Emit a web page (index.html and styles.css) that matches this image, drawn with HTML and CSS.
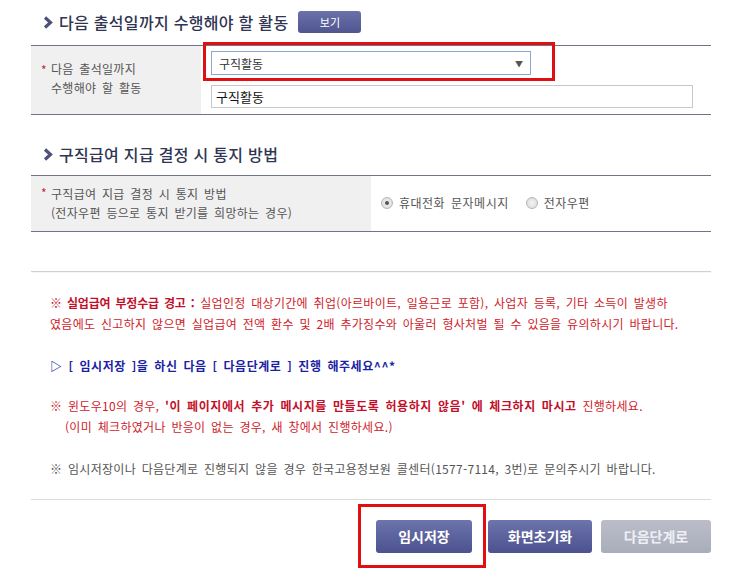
FILE: index.html
```html
<!DOCTYPE html>
<html lang="ko">
<head>
<meta charset="utf-8">
<link rel="stylesheet" href="styles.css">
</head>
<body>
<div class="wrap">
  <div class="sec-title first">
    <svg class="chev" width="10" height="13" viewBox="0 0 10 13"><polyline points="2,1.5 7.5,6.5 2,11.5" fill="none" stroke="#4c5275" stroke-width="3.2"/></svg>
    <span class="ttl">다음 출석일까지 수행해야 할 활동</span>
    <span class="btn-view">보기</span>
  </div>
  <div class="tbl t1">
    <div class="lbl"><span class="req">*</span><span>다음 출석일까지<br>수행해야 할 활동</span></div>
    <div class="val">
      <div class="sel"><span>구직활동</span><span class="arr">▼</span></div>
      <div class="inp">구직활동</div>
    </div>
    <div class="mark m1"></div>
  </div>

  <div class="sec-title second">
    <svg class="chev" width="10" height="13" viewBox="0 0 10 13"><polyline points="2,1.5 7.5,6.5 2,11.5" fill="none" stroke="#4c5275" stroke-width="3.2"/></svg>
    <span class="ttl">구직급여 지급 결정 시 통지 방법</span>
  </div>
  <div class="tbl t2">
    <div class="lbl"><span class="req">*</span><span>구직급여 지급 결정 시 통지 방법<br>(전자우편 등으로 통지 받기를 희망하는 경우)</span></div>
    <div class="val radios">
      <span class="radio on"></span><span class="rt">휴대전화 문자메시지</span>
      <span class="radio"></span><span class="rt">전자우편</span>
    </div>
  </div>

  <div class="sep"></div>
  <div class="notice">
    <p class="red"><b>※ 실업급여 부정수급 경고 :</b> 실업인정 대상기간에 취업(아르바이트, 일용근로 포함), 사업자 등록, 기타 소득이 발생하<br>였음에도 신고하지 않으면 실업급여 전액 환수 및 2배 추가징수와 아울러 형사처벌 될 수 있음을 유의하시기 바랍니다.</p>
    <p class="blue">▷ [ 임시저장 ]을 하신 다음 [ 다음단계로 ] 진행 해주세요^^*</p>
    <p class="red">※ 윈도우10의 경우, <b class="wide">'이 페이지에서 추가 메시지를 만들도록 허용하지 않음' 에 체크하지 마시고</b> 진행하세요.<br><span class="ind">(이미 체크하였거나 반응이 없는 경우, 새 창에서 진행하세요.)</span></p>
    <p class="gray">※ 임시저장이나 다음단계로 진행되지 않을 경우 한국고용정보원 콜센터(1577-7114, 3번)로 문의주시기 바랍니다.</p>
  </div>
  <div class="sep2"></div>
  <div class="btns">
    <span class="btn b1">임시저장</span>
    <span class="btn b2">화면초기화</span>
    <span class="btn b3">다음단계로</span>
    <div class="mark m2"></div>
  </div>
</div>
</body>
</html>
```

FILE: styles.css
```css
* { box-sizing: border-box; }
html, body { margin: 0; padding: 0; background: #fff; }
body { font-family: "Noto Sans CJK KR", "Noto Sans", sans-serif; font-size: 12px; color: #555; }
.wrap { width: 680px; margin-left: 31px; position: relative; }

.sec-title { display: flex; align-items: center; height: 24px; padding-left: 12px; }
.sec-title.first { margin-top: 10px; margin-bottom: 11px; }
.sec-title.second { margin-top: 27px; margin-bottom: 9px; }
.chev { margin-right: 6px; }
.ttl { font-size: 16px; font-weight: 500; line-height: 24px; color: #2f3552; letter-spacing: 0.3px; }
.btn-view { margin-left: 10px; width: 63px; height: 22px; line-height: 22px; text-align: center; color: #fff; font-size: 11px; border-radius: 3px; background: linear-gradient(#6b71a8, #4f5590); }

.tbl { display: flex; border-top: 1px solid #6f7489; border-bottom: 1px solid #6f7489; position: relative; }
.t1 { height: 70px; }
.t2 { height: 57px; }
.lbl { background: #f0f0f0; display: flex; align-items: center; padding-left: 10px; line-height: 19px; color: #555; letter-spacing: 0.3px; word-spacing: 2px; }
.t1 .lbl { width: 170px; padding-bottom: 4px; }
.t2 .lbl { width: 340px; padding-bottom: 2px; }
.req { color: #c4283a; width: 10px; align-self: flex-start; }
.t1 .req { margin-top: 14px; }
.t2 .req { margin-top: 7px; }
.lbl > span:last-child { display: block; }
.val { padding-left: 10px; }
.t1 .val { padding-top: 5px; }
.sel { width: 320px; height: 24px; border: 1px solid #86a8d8; display: flex; align-items: center; justify-content: space-between; padding: 0 7px 0 7px; color: #333; font-size: 12px; background: #fff; }
.arr { font-size: 8px; color: #555; }
.inp { margin-top: 10px; width: 482px; height: 23px; border: 1px solid #c8c8c8; line-height: 21px; padding-left: 4px; color: #111; font-size: 13px; }
.radios { display: flex; align-items: center; padding-bottom: 2px; }
.radio { width: 12px; height: 12px; border-radius: 50%; border: 1px solid #b5b5b5; background: radial-gradient(#f4f4f4, #d8d8d8); position: relative; }
.radio.on::after { content: ""; position: absolute; left: 3px; top: 3px; width: 4px; height: 4px; border-radius: 50%; background: #555; }
.rt { margin-left: 6px; margin-right: 17px; color: #555; letter-spacing: 0.5px; word-spacing: 2px; }

.mark { position: absolute; border: 3px solid #e00f12; }
.m1 { left: 172px; top: -4px; width: 352px; height: 39px; }

.sep { margin-top: 39px; height: 2px; border-top: 1px solid #d0d0d0; background: #f6f6f6; }
.notice { padding-left: 19px; padding-top: 19px; }
.notice p { margin: 0; line-height: 21px; white-space: nowrap; word-spacing: 2px; letter-spacing: 0.3px; }
.notice b { letter-spacing: -0.2px; }
.notice b.wide { letter-spacing: 0.6px; }
.red { color: #cf1b2a; margin-bottom: 21px !important; }
.red b { color: #c2102a; }
.blue { color: #1d1fa3; font-weight: bold; letter-spacing: 0.55px !important; margin-bottom: 19px !important; }
.gray { color: #555; }
.ind { padding-left: 15px; }
.sep2 { margin-top: 20px; height: 1px; background: #dcdcdc; }

.btns { display: flex; justify-content: flex-end; padding-top: 20px; position: relative; height: 74px; }
.btn { height: 33px; line-height: 33px; text-align: center; color: #fff; font-weight: bold; font-size: 14px; border-radius: 3px; background: linear-gradient(#6d73ab, #4c528e); }
.b1 { width: 96px; }
.b2 { width: 104px; margin-left: 16px; }
.b3 { width: 110px; margin-left: 9px; background: linear-gradient(#bbbec9, #a9acba); color: #eef0f6; }
.m2 { left: 327px; top: 4px; width: 128px; height: 64px; }
```
